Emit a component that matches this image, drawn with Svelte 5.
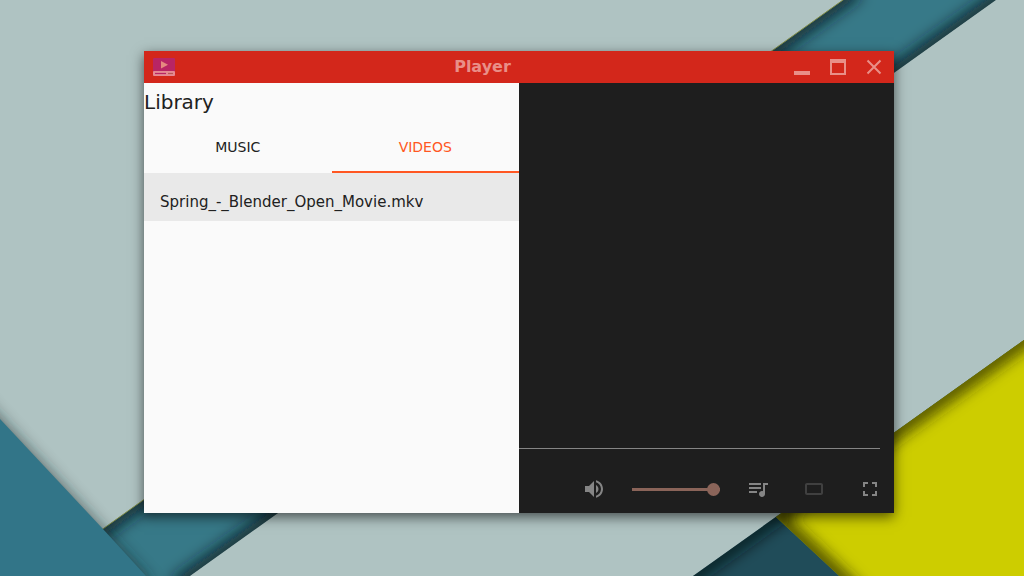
<script>
  let tab = $state('videos');
  let volume = $state(100);
  let position = $state(0);
  const library = {
    music: [],
    videos: ['Spring_-_Blender_Open_Movie.mkv']
  };
</script>

<main class="desktop">
  <svg class="wallpaper" viewBox="0 0 1024 576" preserveAspectRatio="xMidYMid slice" aria-hidden="true">
    <defs>
      <filter id="soft" x="-20%" y="-20%" width="140%" height="140%"><feGaussianBlur stdDeviation="8" /></filter>
      <clipPath id="band"><path d="M857-10 1010-10 176 586 23 586Z" /></clipPath>
      <clipPath id="corner"><path d="M1038 330V586H679Z" /></clipPath>
      <clipPath id="sun"><path d="M1038 330V586H850L776 517Z" /></clipPath>
    </defs>
    <rect width="1024" height="576" fill="#afc3c2" />
    <g clip-path="url(#band)">
      <path d="M857-10 1010-10 176 586 23 586Z" fill="#377988" />
      <path d="M857-10 23 586M1010-10 176 586" stroke="#071b22" stroke-width="13" filter="url(#soft)" />
    </g>
    <path d="M857-10 23 586" stroke="#7f8b45" stroke-width="1" />
    <g clip-path="url(#corner)">
      <rect x="670" y="320" width="370" height="270" fill="#204c59" />
      <path d="M1038 330 679 586" stroke="#061217" stroke-width="12" filter="url(#soft)" />
    </g>
    <g clip-path="url(#sun)">
      <rect x="670" y="320" width="370" height="270" fill="#cdcd00" />
      <path d="M1052 320 776 517 860 596" fill="none" stroke="#242400" stroke-width="12" filter="url(#soft)" />
    </g>
    <path d="M-20 398 154 586H-20Z" fill="#172527" opacity=".7" filter="url(#soft)" />
    <path d="M-10 408.500 0 419 103 529 146 576 155 586H-10Z" fill="#327588" />
  </svg>

  <section class="window" aria-label="Player">
    <header class="titlebar">
      <svg class="appicon" viewBox="0 0 22 18" aria-hidden="true">
        <rect width="22" height="14" rx="1" fill="#b82565" />
        <path d="M8 3v7.500l7-3.750z" fill="#e58a80" />
        <rect y="13" width="22" height="5" rx="1" fill="#e58a94" />
        <path d="M2 15.500h11" stroke="#b82565" stroke-width="1.200" />
        <path d="M15 15.500h5" stroke="#b85a55" stroke-width="1.200" />
      </svg>
      <h1>Player</h1>
      <div class="winbuttons">
        <button aria-label="Minimize"><svg viewBox="0 0 24 24"><path d="M4 16h16v4H4z" /></svg></button>
        <button aria-label="Maximize"><svg viewBox="0 0 24 24"><path d="M4 4h16v16H4zM6 8v10h12V8z" fill-rule="evenodd" /></svg></button>
        <button aria-label="Close"><svg viewBox="0 0 24 24"><path d="M5.500 5.500l13 13M18.500 5.500l-13 13" stroke="currentColor" stroke-width="2" /></svg></button>
      </div>
    </header>

    <div class="content">
      <aside class="library">
        <h2>Library</h2>
        <div class="tabs" role="tablist">
          <button role="tab" aria-selected={tab === 'music'} class:active={tab === 'music'} onclick={() => (tab = 'music')}>MUSIC</button>
          <button role="tab" aria-selected={tab === 'videos'} class:active={tab === 'videos'} onclick={() => (tab = 'videos')}>VIDEOS</button>
        </div>
        <ul>
          {#each library[tab] as file}
            <li><button>{file}</button></li>
          {/each}
        </ul>
      </aside>

      <section class="player" aria-label="Video">
        <div class="screen"></div>
        <input class="seek" type="range" aria-label="Position" bind:value={position} />
        <div class="controls">
          <div class="volume">
            <button aria-label="Mute"><svg viewBox="0 0 24 24"><path d="M3 9v6h4l5 5V4L7 9H3zm13.500 3c0-1.770-1.020-3.290-2.500-4.030v8.050c1.480-.730 2.500-2.250 2.500-4.020zM14 3.230v2.060c2.890.860 5 3.540 5 6.710s-2.110 5.850-5 6.710v2.060c4.010-.910 7-4.490 7-8.770s-2.990-7.860-7-8.770z" /></svg></button>
            <input type="range" aria-label="Volume" bind:value={volume} />
          </div>
          <div class="actions">
            <button aria-label="Playlist"><svg viewBox="0 0 24 24"><path d="M15 6H3v2h12V6zm0 4H3v2h12v-2zM3 16h8v-2H3v2zM17 6v8.180c-.310-.110-.650-.180-1-.180-1.660 0-3 1.340-3 3s1.340 3 3 3 3-1.340 3-3V8h3V6h-5z" /></svg></button>
            <button aria-label="Aspect ratio" disabled><svg viewBox="0 0 24 24"><path d="M19 6H5c-1.100 0-2 .900-2 2v8c0 1.100.900 2 2 2h14c1.100 0 2-.900 2-2V8c0-1.100-.900-2-2-2zm0 10H5V8h14v8z" /></svg></button>
            <button aria-label="Fullscreen"><svg viewBox="0 0 24 24"><path d="M7 14H5v5h5v-2H7v-3zm-2-4h2V7h3V5H5v5zm12 7h-3v2h5v-5h-2v3zM14 5v2h3v3h2V5h-5z" /></svg></button>
          </div>
        </div>
      </section>
    </div>
  </section>
</main>

<style>
  :global(body) { margin: 0; }
  .desktop {
    position: relative;
    box-sizing: border-box;
    min-height: 100vh;
    padding: 51px 130px 63px 144px;
    display: grid;
    overflow: hidden;
    font-family: "DejaVu Sans", sans-serif;
    color: #212121;
  }
  .wallpaper { position: absolute; inset: 0; width: 100%; height: 100%; }
  h1, h2, ul { margin: 0; padding: 0; }
  button {
    margin: 0;
    padding: 0;
    border: 0;
    background: none;
    color: inherit;
    font: inherit;
  }
  button svg { display: block; width: 24px; height: 24px; fill: currentColor; }
  .window {
    position: relative;
    display: flex;
    flex-direction: column;
    box-shadow: 0 4px 12px rgba(0, 0, 0, .6);
  }
  .titlebar {
    display: flex;
    align-items: center;
    height: 32px;
    padding: 0 8px;
    background: #d3271b;
    color: #e98f88;
  }
  .appicon { width: 22px; height: 18px; margin-left: 1px; }
  h1 { flex: 1; font-size: 16px; line-height: 32px; text-align: center; }
  .winbuttons { display: flex; gap: 12px; }
  .content { flex: 1; display: grid; grid-template-columns: 1fr 1fr; }
  .library { background: #fafafa; }
  h2 { font-size: 20px; font-weight: 400; line-height: 38px; }
  .tabs { display: grid; grid-template-columns: 1fr 1fr; height: 52px; font-size: 14px; }
  .tabs button { padding-top: 2px; border-bottom: 2px solid transparent; }
  .tabs .active { color: #ff5722; border-color: #ff5722; }
  ul { list-style: none; }
  li button {
    width: 100%;
    height: 48px;
    padding: 10px 16px 0;
    background: #e9e9e9;
    font-size: 15px;
    text-align: left;
  }
  .player {
    display: flex;
    flex-direction: column;
    background: #1e1e1e;
    color: #858585;
  }
  .screen { flex: 1; }
  input[type="range"] {
    appearance: none;
    margin: 0;
    background: none;
  }
  .player .seek { height: 17px; margin-right: 14px; }
  .seek::-webkit-slider-runnable-track { height: 1px; background: #858585; }
  .seek::-webkit-slider-thumb { appearance: none; width: 1px; height: 1px; }
  .controls {
    display: flex;
    align-items: center;
    justify-content: flex-end;
    height: 48px;
    margin-top: 8px;
    padding-right: 12px;
  }
  .volume { display: flex; align-items: center; gap: 26px; margin-right: 26px; }
  .volume input { width: 88px; height: 24px; }
  .volume input::-webkit-slider-runnable-track {
    height: 13px;
    background: linear-gradient(#8a6459, #8a6459) center / 100% 3px no-repeat;
  }
  .volume input::-webkit-slider-thumb {
    appearance: none;
    width: 13px;
    height: 13px;
    border-radius: 50%;
    background: #8a6459;
  }
  .actions { display: flex; gap: 32px; }
  .actions button:disabled { color: #404040; }
</style>
